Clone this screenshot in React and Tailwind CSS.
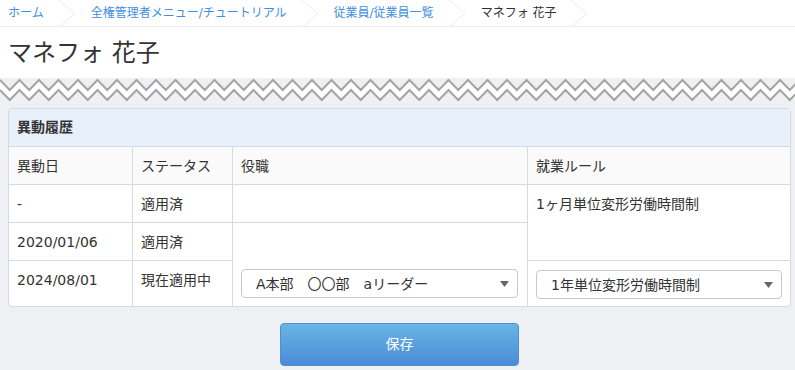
import React from 'react';

const font = { fontFamily: '"DejaVu Sans", "Noto Sans CJK JP", sans-serif' };

const crumbs = [
    { label: 'ホーム', link: true },
    { label: '全権管理者メニュー/チュートリアル', link: true },
    { label: '従業員/従業員一覧', link: true },
    { label: 'マネフォ 花子', link: false },
];

const Chevron = () => (
    <svg width="17" height="27" viewBox="0 0 17 27" className="mx-[15px] shrink-0">
        <polyline points="0,0 16,13.5 0,27" fill="none" stroke="#ececec" strokeWidth="1" />
    </svg>
);

const Zigzag = () => {
    const step = 9.75;
    const n = Math.ceil(800 / step) + 1;
    const top = [];
    const bottom = [];
    for (let i = 0; i < n; i++) {
        const x = i * step;
        const up = i % 2 === 0;
        top.push(`${x},${up ? 2 : 12}`);
        bottom.push(`${x},${up ? 12 : 22}`);
    }
    const fill = [...top, ...bottom.slice().reverse()].join(' ');
    return (
        <svg width="795" height="26" className="block">
            <polygon points={fill} fill="#ffffff" />
            <polyline points={top.join(' ')} fill="none" stroke="#a5a5a5" strokeWidth="2" />
            <polyline points={bottom.join(' ')} fill="none" stroke="#a5a5a5" strokeWidth="2" />
        </svg>
    );
};

const Select = ({ value }) => (
    <div className="h-[29px] flex items-center justify-between border border-[#c9c9c9] rounded-[4px] bg-white pl-[14px] pr-[8px]">
        <span className="text-[14px] text-[#333]">{value}</span>
        <svg width="9" height="6" viewBox="0 0 9 6">
            <polygon points="0,0 9,0 4.5,6" fill="#666" />
        </svg>
    </div>
);

const cell = 'border-[#d6d9de] px-2 pt-[9px] text-[14px] leading-[20px] text-[#333]';

export default function App() {
    return (
        <div className="w-[795px] h-[370px] bg-[#eff0f4] overflow-hidden" style={font}>
            <div className="bg-white">
                <div className="h-[27px] flex items-center pl-2 border-b border-[#ebebeb] text-[12px]">
                    {crumbs.map((c, i) => (
                        <React.Fragment key={i}>
                            <span className={c.link ? 'text-[#3f8fde]' : 'text-[#333]'}>{c.label}</span>
                            <Chevron />
                        </React.Fragment>
                    ))}
                </div>
                <div className="h-[51px] flex items-center pl-2">
                    <h1 className="text-[24px] text-[#333]">マネフォ 花子</h1>
                </div>
            </div>

            <Zigzag />

            <div className="pl-2 pr-[4px] mt-[4px]">
                <div className="bg-white border border-[#d6d9de] rounded-[4px] overflow-hidden">
                    <div className="h-[38px] flex items-center px-2 bg-[#e8f0fb] border-b border-[#d6d9de] text-[14px] font-bold text-[#333]">
                        異動履歴
                    </div>
                    <div className="grid grid-cols-[124px_100px_295px_1fr] grid-rows-[38px_38px_38px_45px]">
                        <div className={`${cell} bg-[#fafafa] border-r border-b`}>異動日</div>
                        <div className={`${cell} bg-[#fafafa] border-r border-b`}>ステータス</div>
                        <div className={`${cell} bg-[#fafafa] border-r border-b`}>役職</div>
                        <div className={`${cell} bg-[#fafafa] border-b`}>就業ルール</div>

                        <div className={`${cell} border-r border-b`}>-</div>
                        <div className={`${cell} border-r border-b`}>適用済</div>
                        <div className={`${cell} border-r border-b`}></div>
                        <div className={`${cell} border-b row-span-2`}>1ヶ月単位変形労働時間制</div>

                        <div className={`${cell} border-r border-b`}>2020/01/06</div>
                        <div className={`${cell} border-r border-b`}>適用済</div>
                        <div className={`${cell} border-r row-span-2 flex flex-col justify-end pb-[8px] pr-[9px]`}>
                            <Select value="A本部　〇〇部　aリーダー" />
                        </div>

                        <div className={`${cell} border-r`}>2024/08/01</div>
                        <div className={`${cell} border-r`}>現在適用中</div>
                        <div className={`${cell} pt-[8px]`}>
                            <Select value="1年単位変形労働時間制" />
                        </div>
                    </div>
                </div>

                <div className="flex justify-center mt-[16px]">
                    <button className="w-[239px] h-[43px] rounded-[4px] border border-[#4f8fd8] bg-gradient-to-b from-[#68b5e3] to-[#4b8bd7] text-white text-[14px]">
                        保存
                    </button>
                </div>
            </div>
        </div>
    );
}
